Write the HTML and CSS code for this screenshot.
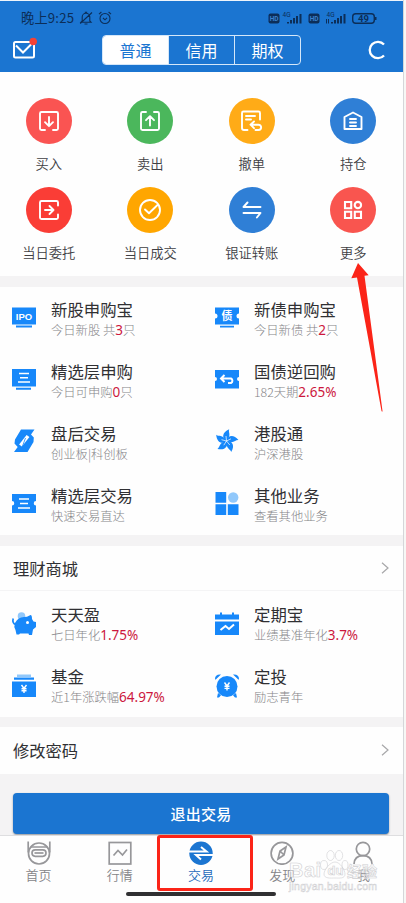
FILE: index.html
```html
<!DOCTYPE html>
<html lang="zh-CN">
<head>
<meta charset="utf-8">
<title>交易</title>
<link rel="stylesheet" href="styles.css">
</head>
<body>
<div class="page">
<main class="screen">
  <header class="header">
    <div class="status">
      <span class="time">晚上9:25</span>
      <svg class="st-icon" width="14" height="14" viewBox="0 0 14 14"><path d="M3.2 10V6a3.8 3.8 0 0 1 7.6 0v4l1.2 1.2H2L3.2 10M5.5 13h3M1.2 12.5 13 1.5M5.8 1.3h2.4"/></svg>
      <svg class="st-icon" width="14" height="14" viewBox="0 0 14 14"><circle cx="7" cy="7.5" r="5"/><path d="M1 3.2 3.4 1M13 3.2 10.6 1M5 7l2 1.8L9 6.8"/></svg>
      <svg class="signals" width="112" height="16" viewBox="0 0 112 16">
        <rect x="0.500" y="3.500" width="11" height="10" rx="2"/><rect x="40.500" y="3.500" width="11" height="10" rx="2"/>
        <text class="hd" x="1.700" y="11">HD</text><text class="hd" x="41.700" y="11">HD</text>
        <text class="g4" x="14.500" y="6.500">4G</text><text class="g4" x="58.500" y="6.500">4G</text>
        <path d="M19 12h2v1.500h-2zM22 10h2v3.500h-2zM25 8h2v5.500h-2zM28 6h2v7.500h-2zM31.500 4h2v9.500h-2zM63 12h2v1.500h-2zM66 10h2v3.500h-2zM69 8h2v5.500h-2zM72 6h2v7.500h-2zM75.500 4h2v9.500h-2zM58 9h1v4.500h-1zM60 9h1v4.500h-1z"/>
        <rect class="battery" x="84.700" y="3.700" width="21.600" height="9.600" rx="3"/><rect x="107" y="7" width="1.500" height="3"/>
        <text class="bt" x="90" y="12">49</text>
      </svg>
    </div>
    <div class="topbar">
      <svg class="mail" width="26" height="24" viewBox="0 0 26 24"><rect x="3" y="5" width="20" height="15.500" rx="1.500"/><path d="m5 8.500 7 7 9-9"/><circle cx="22.200" cy="4.500" r="3.800"/></svg>
      <div class="tabs"><span class="tab on">普通</span><span class="tab">信用</span><span class="tab">期权</span></div>
      <svg class="refresh" width="20" height="22" viewBox="0 0 20 22"><path d="M17 5.500A8.200 8.200 0 1 0 17 16.500"/></svg>
    </div>
  </header>

  <section class="actions">
    <div class="action"><span class="disc coral"><svg viewBox="0 0 24 24"><path d="M8 21H4.500Q3 21 3 19.500V4.500Q3 3 4.500 3h15Q21 3 21 4.500v15q0 1.500-1.500 1.500H16M12 8v9M8 13.200l4 4 4-4"/></svg></span><span>买入</span></div>
    <div class="action"><span class="disc green"><svg viewBox="0 0 24 24"><path d="M8 3H4.500Q3 3 3 4.500v15Q3 21 4.500 21h15q1.500 0 1.500-1.500v-15Q21 3 19.500 3H16M12 16.500V7.500M8 11.200l4-4 4 4"/></svg></span><span>卖出</span></div>
    <div class="action"><span class="disc amber"><svg viewBox="0 0 24 24"><path d="M7.500 21H4Q2 21 2 19V4q0-1.500 1.500-1.500h15Q20 2.500 20 4v6.500M6 7h9M6 10.500h5M14 12.500l-3.500 3.200 3.500 3.500M11 15.700h7.500a2.600 2.600 0 0 1 0 5.300h-3"/></svg></span><span>撤单</span></div>
    <div class="action"><span class="disc blue"><svg viewBox="0 0 24 24"><path d="M3.500 8 12 3.500 20.500 8v12h-17zM9 10h6M9 13.500h6M9 17h6"/></svg></span><span>持仓</span></div>
    <div class="action"><span class="disc red"><svg viewBox="0 0 24 24"><path d="M21 7.500v-3Q21 3 19.500 3h-15Q3 3 3 4.500v15Q3 21 4.500 21h15q1.500 0 1.500-1.500v-3M8 12h8.500M12.500 8l4 4-4 4"/></svg></span><span>当日委托</span></div>
    <div class="action"><span class="disc orange"><svg viewBox="0 0 24 24"><circle cx="12" cy="12" r="10"/><path d="m7 11.500 4 3.800 8.500-8.300"/></svg></span><span>当日成交</span></div>
    <div class="action"><span class="disc blue"><svg viewBox="0 0 24 24"><path d="M20.500 9H3.500L7.500 4.500M3.500 15h17l-3.600 4.500"/></svg></span><span>银证转账</span></div>
    <div class="action"><span class="disc coral2"><svg class="sharp" viewBox="0 0 24 24"><path d="M4 4h6.200v6.200H4zM4 13.800h6.200V20H4zM13.800 13.800H20V20h-6.200z"/><circle cx="16.900" cy="7.100" r="3.200"/></svg></span><span>更多</span></div>
  </section>

  <section class="services">
    <div class="service"><svg viewBox="0 0 24 24"><path d="M0 2.500h24v17H0zM4 20.500h16v2H4z"/><text class="ipo" x="12" y="14.500">IPO</text></svg><div class="copy"><h3>新股申购宝</h3><p>今日新股 共<b>3</b>只</p></div></div>
    <div class="service"><svg viewBox="0 0 24 24"><path d="M0 2.500h24v6a2.500 2.500 0 0 0 0 5v6H0v-6a2.500 2.500 0 0 0 0-5zM5 20.800h14v1.800H5z"/><text class="zh" x="12" y="15">债</text></svg><div class="copy"><h3>新债申购宝</h3><p>今日新债 共<b>2</b>只</p></div></div>
    <div class="service"><svg viewBox="0 0 24 24"><path d="M0 2h24v17.500H0zM4 20.800h15v1.900H4z"/><path class="line" d="M7 6.500h10M8 10.700h8M6 15h12"/></svg><div class="copy"><h3>精选层申购</h3><p>今日可申购<b>0</b>只</p></div></div>
    <div class="service"><svg viewBox="0 0 24 24"><path d="M0 3h24v7a2 2 0 0 0 0 4v7.500H0V14a2 2 0 0 0 0-4z"/><path class="line thick" d="M9.500 8 6 11.500 9.500 15M6.500 11.500h9.500a2.500 2.500 0 0 1 0 4.500H13"/></svg><div class="copy"><h3>国债逆回购</h3><p>182天期<b>2.65%</b></p></div></div>
    <div class="service"><svg viewBox="0 0 24 24"><path d="M9 .5h13.500L19 5.500 21.800 8.500 21.500 13 15.500 23H2l3.700-5L2.500 14.500 3 10.500z"/><path class="line slash" d="m8.500 16.500 7.500-9.500"/><path class="rib" d="m10 18.500 3.500-9.500"/></svg><div class="copy"><h3>盘后交易</h3><p>创业板|科创板</p></div></div>
    <div class="service"><svg viewBox="0 0 24 24"><path d="M11.500 12C6.500 9.200 7 3.200 14.200.3 12.800 3.800 17 5.500 11.500 12z"/><path d="M11.500 12C6.500 9.200 7 3.200 14.200.3 12.800 3.800 17 5.500 11.500 12z" transform="rotate(72 11.500 12)"/><path d="M11.500 12C6.500 9.200 7 3.200 14.200.3 12.800 3.800 17 5.500 11.500 12z" transform="rotate(144 11.500 12)"/><path d="M11.500 12C6.500 9.200 7 3.200 14.200.3 12.800 3.800 17 5.500 11.500 12z" transform="rotate(216 11.500 12)"/><path d="M11.500 12C6.500 9.200 7 3.200 14.200.3 12.800 3.800 17 5.500 11.500 12z" transform="rotate(288 11.500 12)"/><path class="vein" d="M11.500 12 11 7M11.500 12l4.500-2.200M11.500 12l3.300 4M11.500 12l-2.700 4.200M11.500 12l-5-1.300"/></svg><div class="copy"><h3>港股通</h3><p>沪深港股</p></div></div>
    <div class="service"><svg viewBox="0 0 24 24"><path d="M0 3h24v7a2.200 2.200 0 0 0 0 4.500V22H0v-7.500A2.200 2.200 0 0 0 0 10z"/><path class="line" d="M7 8h10M8 12.500h8M6 17h12"/></svg><div class="copy"><h3>精选层交易</h3><p>快速交易直达</p></div></div>
    <div class="service"><svg viewBox="0 0 24 24"><path d="M.5 1h10.700v10.700H.5zM.5 13.300h10.700V24H.5zM12.800 13.300h10.700V24H12.800z"/><circle class="pale" cx="18.200" cy="6.500" r="5.200"/></svg><div class="copy"><h3>其他业务</h3><p>查看其他业务</p></div></div>
  </section>

  <div class="link mall"><span>理财商城</span><svg width="8" height="12" viewBox="0 0 8 12"><path d="m1 .8 6 5.200-6 5.200"/></svg></div>

  <section class="services wealth">
    <div class="service"><svg viewBox="0 0 24 24"><circle class="pale" cx="9.500" cy="4" r="3.800"/><path d="M3 11Q6 5 12 5l3-.3L18.500 3q1.500 0 1.500 4l1.500 2.500 2.500.5v5l-3 2.500-1 5.500h-3l-.5-1.500H8L7 22.500H4.500L3.500 18Q1.500 14.500 3 11"/><path class="tail" d="M3.500 12.500Q0 11 1.200 6.500"/><circle class="eye" cx="15.500" cy="10.500" r="1.500"/></svg><div class="copy"><h3>天天盈</h3><p>七日年化<b>1.75%</b></p></div></div>
    <div class="service"><svg viewBox="0 0 24 24"><path d="M0 2.500h5V.5h2v2h10v-2h2v2h5v5H0zM0 9.500h24V23H0z"/><path class="line thick" d="m5.500 18 5-4 3.500 3 5-4.500"/></svg><div class="copy"><h3>定期宝</h3><p>业绩基准年化<b>3.7%</b></p></div></div>
    <div class="service"><svg viewBox="0 0 24 24"><path class="pale" d="M5 .5h14V3H5z"/><path d="M2 3.500h20v2.300H2zM0 7.500h24V23H0z"/><path class="line" d="m9.500 11 2.500 3.500 2.500-3.500M12 14.500V19M9.500 14.700h5M9.500 16.800h5"/></svg><div class="copy"><h3>基金</h3><p>近1年涨跌幅<b>64.97%</b></p></div></div>
    <div class="service"><svg viewBox="0 0 24 24"><circle cx="12" cy="12.500" r="10.500"/><path d="M0 5Q0 0 6 .5L.5 5.800zM24 5q0-5-6-4.500l5.500 5.300zM3 19l3 2.200L4 23.500H2zM21 19l-3 2.200 2 2.300h2z"/><path class="line" d="m9.500 8.500 2.500 3.500 2.500-3.500M12 12v4.500M9.500 12.300h5M9.500 14.400h5"/></svg><div class="copy"><h3>定投</h3><p>励志青年</p></div></div>
  </section>

  <div class="link password"><span>修改密码</span><svg width="8" height="12" viewBox="0 0 8 12"><path d="m1 .8 6 5.200-6 5.200"/></svg></div>
  <div class="logout-area"><button class="logout">退出交易</button></div>

  <nav class="nav">
    <a class="nav-item"><svg viewBox="0 0 24 24"><path d="M1.200.500v11M22.800.500v11M3.500 6h17"/><circle cx="12" cy="12.500" r="10.500"/><rect x="5" y="8.800" width="14" height="6.500" rx="3.200"/><path d="M7.500 12h9"/></svg><span>首页</span></a>
    <a class="nav-item"><svg viewBox="0 0 24 24"><rect x="1.200" y="1.500" width="21.600" height="21.500"/><path d="m5.500 14.500 4.500-5 4.500 4.500L19 8.500"/></svg><span>行情</span></a>
    <a class="nav-item current"><svg viewBox="0 0 24 24"><circle class="ball" cx="12" cy="12.300" r="11.700"/><path class="swap" d="M0 10.500h17.500L12 6M24 14H7l5 4.500"/></svg><span>交易</span></a>
    <a class="nav-item"><svg viewBox="0 0 24 24"><circle cx="12" cy="12.300" r="10.900"/><path d="m16 6-2 8-6 4 2-8zM10 10l4 4"/></svg><span>发现</span></a>
    <a class="nav-item"><svg viewBox="0 0 24 24"><circle cx="12" cy="8" r="6.700"/><path d="M3 23Q3.500 14.700 12 14.700T21 23"/></svg><span>我</span></a>
  </nav>

  <div class="focus-box"></div>
  <div class="home-bar"></div>
  <svg class="pointer" width="34" height="152" viewBox="0 0 34 152"><path d="M7 1 .3 16.200l5.700-.7L30.500 149q.8 1.500 1 0L13.500 13.800l4.200-.5z"/></svg>
  <svg class="watermark" width="96" height="46" viewBox="0 0 96 46">
    <text class="brand" x="1" y="30" textLength="32">Bai</text>
    <g><ellipse cx="36" cy="18" rx="3.500" ry="4.500"/><ellipse cx="42.500" cy="8.500" rx="3.700" ry="5"/><ellipse cx="51" cy="8.500" rx="3.700" ry="5"/><ellipse cx="57" cy="18" rx="3" ry="4.500"/><path d="M47 15c5 0 10 8 10 12 0 5-6 4-10 4s-11 1-11-4c0-4 6-12 11-12"/></g>
    <text class="du" x="39.500" y="28">du</text><text class="exp" x="59" y="30">经验</text>
    <text class="url" x="1" y="43" textLength="88">jingyan.baidu.com</text>
  </svg>
</main>
<aside class="edge"></aside>
</div>
</body>
</html>
```
FILE: styles.css
```css
* { box-sizing: border-box; }
body { margin: 0; background: #fff; font-family: "Noto Sans CJK SC", sans-serif; color: #303033; }
.page { display: flex; width: 406px; height: 903px; overflow: hidden; }
.screen { position: relative; display: flex; flex-direction: column; width: 403px; height: 903px; overflow: hidden; background: #fefefe; flex: none; }
.edge { flex: 1; border-left: 1px solid #d5d6d9; background: #f7f7f5; }
svg { display: block; flex: none; fill: none; }

.header { height: 72px; border-top: 1px solid #eef4fb; background: #1b75d1; flex: none; }
.status { display: flex; align-items: center; height: 33px; padding-left: 21px; color: #0c2e58; }
.time { width: 53px; font-size: 13.200px; line-height: 20px; letter-spacing: .2px; white-space: nowrap; }
.st-icon { margin-left: 5px; stroke: #0c2e58; stroke-width: 1.1; }
.signals { margin-left: 156px; fill: #0c2e58; font-family: Roboto, sans-serif; }
.hd { font-size: 6.5px; font-weight: 700; fill: #3d83cd; }
.g4 { font-size: 6.5px; }
.bt { font-size: 9.500px; font-weight: 700; }
.battery { fill: none; stroke: #0c2e58; stroke-width: 1.400; }
.topbar { display: flex; align-items: center; height: 31px; padding: 1px 16px 0 11px; }
.mail { margin-top: -2px; stroke: #fff; stroke-width: 2; }
.mail circle { fill: #f34235; stroke: none; }
.tabs { display: flex; width: 199px; height: 30px; margin-left: 65px; border: 1px solid #d5e7f9; border-radius: 4px; overflow: hidden; color: #fff; font-size: 16px; line-height: 28px; }
.tab { flex: 1; text-align: center; border-left: 1px solid #d5e7f9; }
.tab.on { border-left: 0; background: #fff; color: #1b75d1; }
.refresh { margin-left: auto; stroke: #fff; stroke-width: 2.300; }

.actions { display: grid; grid-template-columns: repeat(4, 1fr); grid-auto-rows: 89px; width: 406px; height: 204px; margin-left: -2px; padding-top: 26px; flex: none; }
.action { display: flex; flex-direction: column; align-items: center; font-size: 13.300px; line-height: 20px; font-weight: 350; gap: 10px; color: #404044; }
.disc { display: flex; align-items: center; justify-content: center; width: 46px; height: 46px; border-radius: 50%; }
.disc svg { width: 24px; height: 24px; stroke: #fff; stroke-width: 1.900; stroke-linecap: round; stroke-linejoin: round; }
.disc svg.sharp { stroke-linejoin: miter; stroke-width: 2.100; }
.coral { background: #fa5452; } .coral2 { background: #f9554f; }
.green { background: #4bb75c; } .amber { background: #ffab17; }
.blue { background: #2f7fd6; } .red { background: #fa3d36; } .orange { background: #ffa600; }

.services { display: grid; grid-template-columns: 203px 1fr; grid-auto-rows: 62px; height: 270px; padding-top: 12px; border-top: 11px solid #f4f3f4; border-bottom: 11px solid #f4f3f4; flex: none; }
.service { display: flex; gap: 15px; padding-left: 12px; }
.service > svg { width: 24px; height: 24px; margin-top: 6px; fill: #1788fa; overflow: visible; }
.copy { min-width: 0; white-space: nowrap; }
.service h3 { margin: 0; font-size: 16.400px; line-height: 20px; font-weight: 400; }
.service p { margin: 1px 0 0; font-size: 12.300px; line-height: 20px; font-weight: 300; color: #858588; }
.service b { font: 400 13.500px/18px "Noto Sans", sans-serif; color: #cc173d; }
.line { fill: none; stroke: #fff; stroke-width: 1.400; }
.thick { stroke-width: 2; }
.slash { stroke-width: 3.600; }
.rib { fill: none; stroke: #1788fa; stroke-width: .8; }
.pale { fill: #91c8fb; }
.vein { fill: none; stroke: #fff; stroke-width: .7; }
.tail { fill: none; stroke: #1788fa; stroke-width: 1.700; }
.eye { fill: #fff; }
.ipo { fill: #fff; font: 700 9.500px "Liberation Sans", sans-serif; text-anchor: middle; }
.zh { fill: #fff; font-size: 11px; font-weight: 700; text-anchor: middle; }

.link { display: flex; align-items: center; justify-content: space-between; padding: 0 14px 0 13px; font-size: 16.300px; line-height: 24px; flex: none; }
.link svg { stroke: #a7a7a9; stroke-width: 1.200; }
.mall { height: 45px; border-bottom: 1px solid #f4f4f5; }
.wealth { height: 136px; padding-top: 13px; border-top: 0; border-bottom-width: 10px; }
.wealth .service > svg { margin-top: 8px; }
.password { height: 47px; padding-bottom: 1px; }
.logout-area { height: 61px; padding: 19px 14px 0 13px; background: #f4f3f4; flex: none; }
.logout { display: block; width: 100%; height: 41px; padding: 0; border: 0; border-radius: 4px; background: #1b75d1; color: #fff; font: 500 15px/41px "Noto Sans CJK SC", sans-serif; letter-spacing: .2px; box-shadow: 0 1px 2px #91959b; }

.nav { display: flex; height: 68px; padding-top: 5px; border-top: 1px solid #dedee0; background: #fefefe; width: 406px; margin-left: -2px; flex: none; }
.nav-item { display: flex; flex: 1; flex-direction: column; align-items: center; gap: 1px; font-size: 13px; line-height: 18px; font-weight: 350; color: #858588; }
.nav-item svg { width: 24px; height: 24px; stroke: #97979a; stroke-width: 1.700; }
.current { color: #1b68ba; }
.nav-item .ball { fill: #1b75d1; stroke: none; }
.nav-item .swap { stroke: #fff; stroke-width: 2; }

.focus-box { position: absolute; left: 157px; top: 835px; width: 96px; height: 56px; border: 3px solid #fb2418; border-radius: 3px; }
.home-bar { position: absolute; left: 126px; top: 892px; width: 150px; height: 4px; border-radius: 2px; background: #303032; }
.pointer { position: absolute; left: 351px; top: 262px; fill: #fb2418; }
.watermark { position: absolute; left: 288px; top: 847px; fill: #fff; fill-opacity: .45; stroke: #cfcfd2; stroke-width: .6; font-family: "Liberation Sans", "Noto Sans CJK SC", sans-serif; font-weight: 700; }
.brand { font-size: 20px; } .du { font-size: 13px; } .exp { font-size: 15px; } .url { font-size: 10.500px; font-weight: 400; stroke-width: .5; }
```
